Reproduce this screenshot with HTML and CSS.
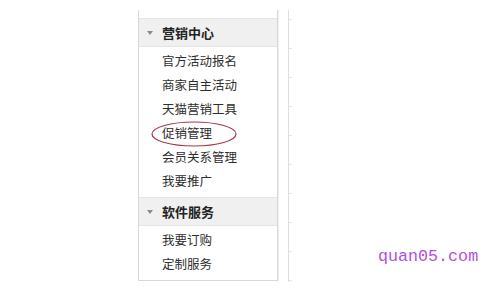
FILE: index.html
```html
<!DOCTYPE html>
<html lang="zh">
<head>
<meta charset="utf-8">
<link rel="stylesheet" href="styles.css">
</head>
<body>
<div class="page">
  <div class="panel">
    <div class="group-head"><span class="arrow"></span>营销中心</div>
    <ul class="items">
      <li>官方活动报名</li>
      <li>商家自主活动</li>
      <li>天猫营销工具</li>
      <li class="marked">促销管理
        <svg class="circle" width="88" height="28" viewBox="0 0 88 28"><ellipse cx="44" cy="14" rx="42" ry="12" fill="none" stroke="#a2384a" stroke-width="1.2"/></svg>
      </li>
      <li>会员关系管理</li>
      <li>我要推广</li>
    </ul>
    <div class="group-head"><span class="arrow"></span>软件服务</div>
    <ul class="items">
      <li>我要订购</li>
      <li>定制服务</li>
    </ul>
  </div>
  <div class="rule"></div>
</div>
<div class="watermark">quan05.com</div>
</body>
</html>
```
FILE: styles.css
```css
html, body {
  margin: 0;
  padding: 0;
  background: #ffffff;
}
body {
  width: 494px;
  height: 292px;
  overflow: hidden;
  position: relative;
  font-family: "Noto Sans CJK SC", "Noto Sans", sans-serif;
  color: #333333;
}
.page {
  display: flex;
  align-items: flex-start;
  padding: 10px 0 0 138px;
}
.panel {
  width: 138px;
  border: 1px solid #d8d8d8;
  border-top: none;
  padding: 8px 0 4px;
  box-shadow: 1px 0 0 #f0f0f0;
}
.group-head {
  display: flex;
  align-items: center;
  height: 27px;
  border-top: 1px solid #e4e4e4;
  border-bottom: 1px solid #e4e4e4;
  background: #f0f0f0;
  font-size: 13px;
  font-weight: bold;
  color: #222222;
  padding-left: 8px;
}
.arrow {
  width: 0;
  height: 0;
  border-left: 3.5px solid transparent;
  border-right: 3.5px solid transparent;
  border-top: 4px solid #8a8a8a;
  margin-right: 9px;
}
.items {
  list-style: none;
  margin: 0 0 4px;
  padding: 2px 0 0;
}
.items:last-child {
  margin-bottom: 0;
}
.items li {
  height: 24px;
  line-height: 24px;
  font-size: 12.5px;
  padding-left: 23px;
  color: #2e2e2e;
}
.marked {
  position: relative;
}
.circle {
  position: absolute;
  left: 11px;
  top: -1px;
}
.rule {
  width: 4px;
  height: 272px;
  margin-left: 10px;
  border-left: 1px solid #dedede;
  background-image: repeating-linear-gradient(to bottom, transparent 0, transparent 9px, #e6e6e6 9px, #e6e6e6 10px, transparent 10px, transparent 29px);
  background-size: 3px 100%;
  background-repeat: no-repeat;
}
.watermark {
  position: absolute;
  left: 378px;
  top: 247px;
  font-family: "Liberation Mono", "DejaVu Sans Mono", monospace;
  font-size: 16.7px;
  color: #b14fe0;
  letter-spacing: 0;
}
```
